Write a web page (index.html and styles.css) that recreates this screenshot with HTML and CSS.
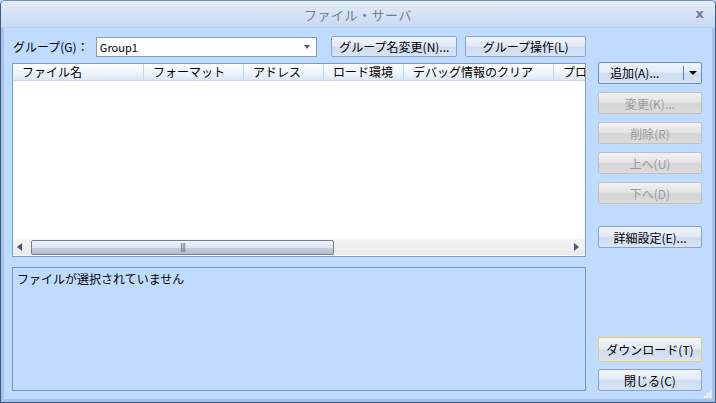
FILE: index.html
```html
<!DOCTYPE html>
<html lang="ja">
<head>
    <meta charset="UTF-8">
    <title>ファイル・サーバ</title>
    <link rel="stylesheet" href="styles.css">
</head>
<body>
    <div class="window">
        <!-- Title bar -->
        <div class="titlebar">
            <span class="title">ファイル・サーバ</span>
            <span class="close">x</span>
        </div>

        <div class="content">
            <!-- Left column -->
            <div class="main">
                <div class="group-row">
                    <span class="label">グループ(G)：</span>
                    <div class="combo">
                        <span>Group1</span>
                        <span class="combo-arrow"></span>
                    </div>
                    <button class="btn btn-rename">グループ名変更(N)...</button>
                    <button class="btn btn-group">グループ操作(L)</button>
                </div>

                <div class="listview">
                    <div class="list-header">
                        <div class="col col-name">ファイル名</div>
                        <div class="col col-format">フォーマット</div>
                        <div class="col col-addr">アドレス</div>
                        <div class="col col-load">ロード環境</div>
                        <div class="col col-debug">デバッグ情報のクリア</div>
                        <div class="col col-last">プロ</div>
                    </div>
                    <div class="list-body"></div>
                    <div class="hscroll">
                        <span class="arrow-left"></span>
                        <div class="track">
                            <div class="thumb"><span class="grip">|||</span></div>
                        </div>
                        <span class="arrow-right"></span>
                    </div>
                </div>

                <div class="info">ファイルが選択されていません</div>
            </div>

            <!-- Right column -->
            <div class="side">
                <div class="btn split">
                    <span class="split-main">追加(A)...</span>
                    <span class="split-drop"></span>
                </div>
                <button class="btn side-btn" disabled>変更(K)...</button>
                <button class="btn side-btn" disabled>削除(R)</button>
                <button class="btn side-btn" disabled>上へ(U)</button>
                <button class="btn side-btn" disabled>下へ(D)</button>
                <button class="btn side-btn detail">詳細設定(E)...</button>
                <div class="spacer"></div>
                <button class="btn side-btn default">ダウンロード(T)</button>
                <button class="btn side-btn close-btn">閉じる(C)</button>
            </div>
        </div>
        <div class="grip-corner"></div>
    </div>
</body>
</html>
```

FILE: styles.css
```css
* {
    margin: 0;
    padding: 0;
    box-sizing: border-box;
}

body {
    font-family: "Noto Sans CJK JP", "DejaVu Sans", sans-serif;
    font-size: 12px;
    color: #000;
    background: #bfdbff;
}

.window {
    position: relative;
    width: 716px;
    height: 403px;
    background: #bfdbff;
    border: 1px solid #3c5a80;
    border-top-color: #6e8fb8;
    border-radius: 5px 5px 0 0;
    display: flex;
    flex-direction: column;
    overflow: hidden;
}

/* Title bar */
.titlebar {
    height: 27px;
    flex-shrink: 0;
    background: linear-gradient(#e4eefa, #d3e2f5 50%, #c8dbf2);
    border-bottom: 1px solid #b6cde9;
    display: flex;
    align-items: center;
    justify-content: center;
    position: relative;
}

.title {
    color: #6f7f92;
    font-size: 13px;
    letter-spacing: 0.5px;
}

.close {
    position: absolute;
    right: 11px;
    top: 5px;
    font-family: "DejaVu Sans", sans-serif;
    font-weight: bold;
    font-size: 13px;
    color: #6b7b92;
}

/* Content */
.content {
    flex: 1;
    display: flex;
    gap: 12px;
    padding: 8px 10px 8px 11px;
    border-left: 3px solid #a7c3e6;
    border-right: 3px solid #a7c3e6;
    border-bottom: 3px solid #a7c3e6;
}

.main {
    width: 574px;
    flex: none;
    margin-left: -3px;
    display: flex;
    flex-direction: column;
}

.group-row {
    display: flex;
    align-items: center;
    height: 21px;
}

.label {
    width: 84px;
    padding-left: 1px;
}

.combo {
    width: 222px;
    height: 20px;
    background: #fff;
    border: 1px solid #7f9db9;
    display: flex;
    align-items: center;
    justify-content: space-between;
    padding: 0 6px 0 3px;
    font-size: 11px;
}

.combo-arrow {
    width: 0;
    height: 0;
    border-left: 3px solid transparent;
    border-right: 3px solid transparent;
    border-top: 4px solid #4a5d80;
}

.btn {
    font-family: inherit;
    font-size: 12px;
    color: #000;
    height: 21px;
    border: 1px solid #8ba4c6;
    border-radius: 2px;
    background: linear-gradient(#f0f5fc, #e2ebf7 45%, #cddcf0 55%, #d6e4f5);
    display: flex;
    align-items: center;
    justify-content: center;
}

.btn-rename {
    width: 126px;
    margin-left: 14px;
}

.btn-group {
    width: 121px;
    margin-left: 8px;
}

/* List view */
.listview {
    margin-top: 6px;
    height: 194px;
    flex: none;
    background: #fff;
    border: 1px solid #7a9cc8;
    display: flex;
    flex-direction: column;
    overflow: hidden;
}

.list-header {
    height: 17px;
    display: flex;
    background: linear-gradient(#ffffff, #f1f5fb 50%, #dde7f5);
    border-bottom: 1px solid #c3d2e6;
    white-space: nowrap;
}

.col {
    padding-left: 9px;
    line-height: 16px;
    border-right: 1px solid #c9d6e8;
    flex-shrink: 0;
}

.col-name { width: 131px; }
.col-format { width: 100px; }
.col-addr { width: 80px; }
.col-load { width: 80px; }
.col-debug { width: 150px; }
.col-last { border-right: none; }

.list-body {
    flex: 1;
}

.hscroll {
    height: 16px;
    margin-bottom: 1px;
    background: linear-gradient(#f4f4f4, #ebebeb);
    display: flex;
    align-items: center;
}

.arrow-left, .arrow-right {
    width: 0;
    height: 0;
    border-top: 4px solid transparent;
    border-bottom: 4px solid transparent;
}

.arrow-left {
    border-right: 5px solid #4a5a7c;
    margin-left: 4px;
}

.arrow-right {
    border-left: 5px solid #4a5a7c;
    margin-left: auto;
    margin-right: 6px;
}

.track {
    width: 538px;
    margin-left: 9px;
    height: 15px;
}

.thumb {
    width: 303px;
    height: 15px;
    border: 1px solid #6f819f;
    border-radius: 2px;
    background: linear-gradient(#eef3f9, #dfe6f0 50%, #c3cddc 55%, #b2bfd1);
    display: flex;
    align-items: center;
    justify-content: center;
}

.grip {
    font-family: "DejaVu Sans", sans-serif;
    font-size: 8px;
    color: #56647e;
    letter-spacing: -1px;
}

/* Info panel */
.info {
    margin-top: 10px;
    flex: 1;
    border: 1px solid #6e96c9;
    padding: 2px 4px;
    background: #bfdbff;
}

/* Side buttons */
.side {
    width: 104px;
    flex: none;
    display: flex;
    flex-direction: column;
    align-items: flex-start;
    gap: 9px;
    padding-top: 26px;
}

.split {
    width: 104px;
    height: 22px;
    border-color: #6a8dbd;
    justify-content: flex-start;
}

.split-main {
    flex: 1;
    padding-left: 11px;
    border-right: 1px solid #5e7fac;
    height: 14px;
    line-height: 14px;
}

.split-drop {
    width: 17px;
    display: flex;
    justify-content: center;
}

.split-drop::after {
    content: "";
    border-left: 4px solid transparent;
    border-right: 4px solid transparent;
    border-top: 4px solid #000;
}

.side-btn {
    width: 104px;
    flex: none;
    height: 22px;
    margin-top: -1px;
}

.side-btn:disabled {
    color: #9b9b9b;
    border-color: #c0c0c0;
    background: linear-gradient(#f2f2f2, #e4e4e4 45%, #d4d4d4 55%, #dcdcdc);
}

.detail {
    margin-top: 13px;
}

.spacer {
    flex: 1;
}

.default {
    height: 25px;
    border-color: #e8cf6a;
}

.close-btn {
    margin-top: -2px;
}

.grip-corner {
    position: absolute;
    right: 3px;
    bottom: 4px;
    width: 9px;
    height: 9px;
    background:
        radial-gradient(circle, #fff 1px, transparent 1.2px) 0 0 / 3px 3px;
    clip-path: polygon(100% 0, 100% 100%, 0 100%);
}
```
